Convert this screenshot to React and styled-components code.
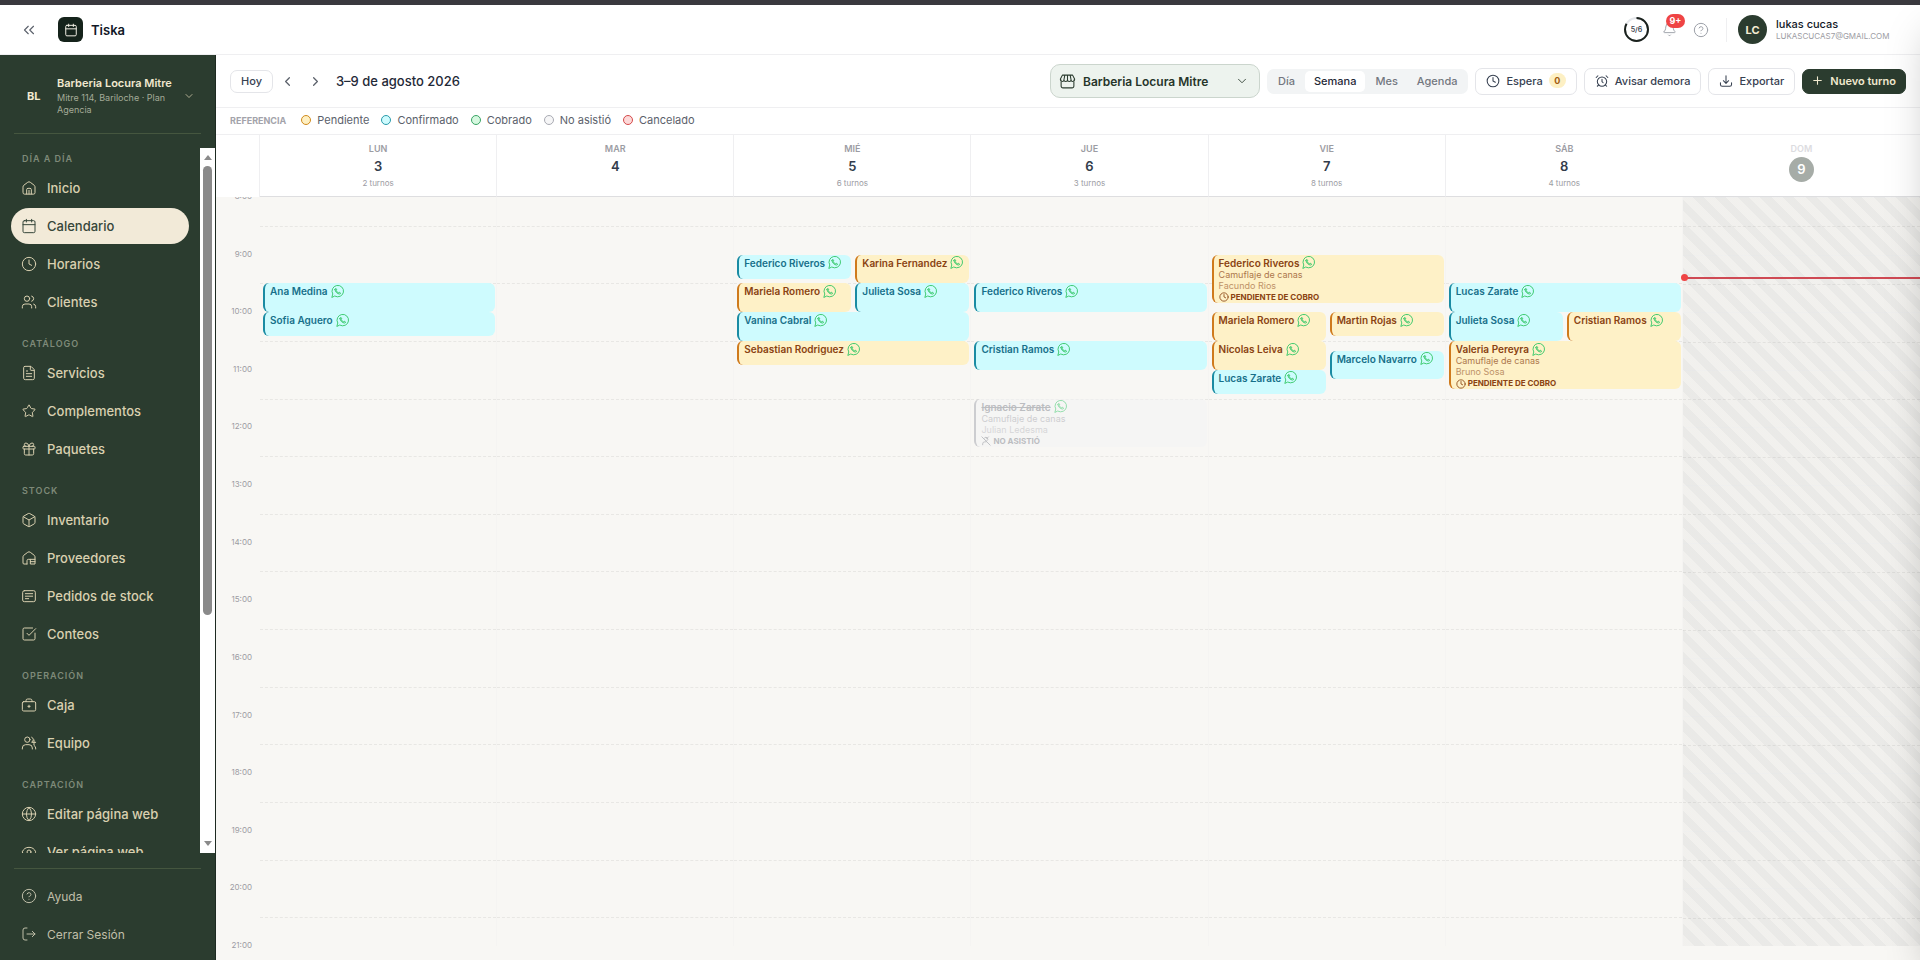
import React from "react";
import styled, { createGlobalStyle, css } from "styled-components";
import {
  AlarmClock, Bell, Box, Calendar, ChevronDown, ChevronLeft, ChevronRight, ChevronsLeft,
  CircleHelp, Clock, Eye, FileText, Gift, Globe, Plus, SquareCheckBig, Star, Users,
} from "lucide-react";

const c = {
  green: "#2b3c2f",
  cream: "#d9d0b0",
  ink: "#1f2937",
  line: "#efeff1",
  muted: "#9c9ca3",
};

const Global = createGlobalStyle`
  *, *::before, *::after { box-sizing: border-box; }
  body { margin: 0; font-family: Inter, "Liberation Sans", sans-serif; color: ${c.ink}; background: #fff; }
  button, select { font: inherit; color: inherit; margin: 0; }
  button { cursor: pointer; padding: 0; border: 0; background: none; }
  a { color: inherit; text-decoration: none; }
  ul, h1, p { margin: 0; padding: 0; list-style: none; }
  svg { display: block; flex: none; }
`;

const Svg = ({ size = 16, sw = 1.5, children }) => (
  <svg width={size} height={size} viewBox="0 0 24 24" fill="none" stroke="currentColor"
    strokeWidth={sw} strokeLinecap="round" strokeLinejoin="round" aria-hidden="true">{children}</svg>
);
const HomeIcon = () => (
  <Svg><path d="M3 10.2c0-.9.4-1.7 1.100-2.200l6-4.600a3.200 3.200 0 0 1 3.800 0l6 4.600c.7.5 1.100 1.300 1.100 2.200V19a2.200 2.200 0 0 1-2.200 2.200H5.200A2.200 2.200 0 0 1 3 19z" /><path d="M8.500 21v-6.500a2 2 0 0 1 2-2h3a2 2 0 0 1 2 2V21M12 15.500V21" /></Svg>
);
const SupplierIcon = () => (
  <Svg><path d="M9 21H4.500A1.500 1.500 0 0 1 3 19.500v-9.300c0-.9.4-1.700 1.100-2.200l6-4.600a3.200 3.200 0 0 1 3.800 0l6 4.600c.7.5 1.100 1.300 1.100 2.200V21H14v-7h7M14 17.500h7M9 21v-5a2 2 0 0 1 2-2h3" /></Svg>
);
const OrderIcon = () => (
  <Svg><rect x="2.500" y="4" width="19" height="16.500" rx="2.500" /><path d="M6.500 8.500h11M6.500 12.300h11M6.500 16h5" /></Svg>
);
const StarIcon = () => <Star size={16} strokeWidth={1.6} aria-hidden="true" viewBox="-1 -1 26 26" />;
const CashIcon = () => (
  <Svg><rect x="2" y="7" width="20" height="14" rx="2" /><path d="M7.500 7V5.500A2.500 2.500 0 0 1 10 3h4a2.500 2.500 0 0 1 2.500 2.500V7M12 12.300v3.400M10.300 14h3.400" /></Svg>
);
const TeamIcon = () => (
  <Svg><circle cx="9.500" cy="7" r="4" /><path d="M2 21v-1.500a5 5 0 0 1 5-5h5a5 5 0 0 1 5 5V21M16 3.300a4 4 0 0 1 0 7.400M19.500 7.500v7M17 11h5M19.500 15.500a5 5 0 0 1 2.500 4V21" /></Svg>
);
const ExitIcon = () => (
  <Svg><path d="M9 3H6a3 3 0 0 0-3 3v12a3 3 0 0 0 3 3h3M9 12h12M17 8l4 4-4 4" /></Svg>
);
const StoreIcon = () => (
  <Svg size={17}><path d="M3 10v8.500A2.500 2.500 0 0 0 5.500 21h13a2.500 2.500 0 0 0 2.500-2.500V10M4.800 3h14.400L22 8.500v1a2.200 2.200 0 0 1-5 0 2.500 2.500 0 0 1-5 0 2.500 2.500 0 0 1-5 0 2.200 2.200 0 0 1-5 0v-1zM7 9.500 8.200 3M12 9.500V3M17 9.500 15.800 3" /></Svg>
);
const ExportIcon = () => (
  <Svg size={14} sw={1.8}><path d="M12 3v13M7.500 11.500 12 16l4.500-4.500M2.500 15v3a3 3 0 0 0 3 3h13a3 3 0 0 0 3-3v-3" /></Svg>
);
const AbsentIcon = () => (
  <Svg size={10} sw={2.2}><path d="M2 2l20 20M8.500 4.500A4.500 4.500 0 1 1 14 11.500M18 2l-5 5M4 21v-2a5 5 0 0 1 5-5h3" /></Svg>
);
const WhatsApp = () => (
  <svg width="13" height="13" viewBox="0 0 24 24" fill="none" stroke="#34c768" strokeWidth="1.7" strokeLinecap="round" strokeLinejoin="round" aria-label="WhatsApp">
    <path d="M1.700 22.300 3.300 16.600A10.600 10.600 0 1 1 7.500 20.700z" />
    <path d="M7.300 8.200c.2 4.300 4.200 8.300 8.500 8.500 1.100 0 1.900-.9 1.900-1.900l-2.700-1.500-1.500 1.100c-1.700-.7-3.100-2.100-3.900-3.900l1.100-1.500-1.400-2.700c-1.100 0-2 .8-2 1.900z" />
  </svg>
);

/* ---------- shell ---------- */
const Shell = styled.div`height: 100vh; display: flex; flex-direction: column; overflow: hidden;`;
const TopStrip = styled.div`height: 5px; flex: none; background: #3a393e;`;
const TopBar = styled.header`
  height: 50px; flex: none; display: flex; align-items: center; padding: 0 25px 0 20px;
  border-bottom: 1px solid ${c.line}; background: #fff;
`;
const IconButton = styled.button`
  display: grid; place-items: center; width: ${(p) => p.$w || 16}px; height: 24px; color: ${(p) => p.$color || "#5b616b"};
`;
const Logo = styled.a`
  display: flex; align-items: center; gap: 8px; margin-left: 22px; font-size: 13px; font-weight: 600; color: #111827;
`;
const LogoMark = styled.span`
  display: grid; place-items: center; width: 25px; height: 25px; border-radius: 6px; background: #15231b; color: #f4f1e6;
`;
const TopRight = styled.div`margin-left: auto; display: flex; align-items: center;`;
const Ring = styled.div`
  display: grid; place-items: center; width: 25px; height: 25px; font-size: 7px; font-weight: 600; color: #3f4650;
  svg, span { grid-area: 1 / 1; }
`;
const BellWrap = styled.div`position: relative; margin-left: 12px;`;
const Badge = styled.span`
  position: absolute; left: 5px; top: -4px; width: 19px; height: 14px; border-radius: 7px; background: #ef4444;
  color: #fff; font-size: 9px; font-weight: 700; line-height: 14px; text-align: center;
`;
const Divider = styled.span`width: 1px; height: 24px; margin: 0 11px 0 1px; background: ${c.line};`;
const Profile = styled.button`display: flex; align-items: center; gap: 9px; text-align: left;`;
const Avatar = styled.span`
  display: grid; place-items: center; width: 29px; height: 29px; border-radius: 50%; background: ${c.green};
  color: #f4ecd2; font-size: 11px; font-weight: 700;
`;
const ProfileText = styled.span`min-width: 119px;`;
const ProfileName = styled.span`display: block; font-size: 11px; line-height: 13px; font-weight: 500; color: #111827;`;
const ProfileMail = styled.span`display: block; font-size: 8px; line-height: 11px; color: ${c.muted};`;
const Body = styled.div`flex: 1; min-height: 0; display: flex;`;

/* ---------- sidebar ---------- */
const Sidebar = styled.aside`
  width: 216px; flex: none; display: flex; flex-direction: column; background: ${c.green}; color: ${c.cream};
  border-right: 1px solid #1d2a21;
`;
const Account = styled.button`
  height: 79px; flex: none; margin: 0 14px; padding: 3px 6px 0 13px; display: flex; align-items: center; text-align: left;
  border-bottom: 1px solid #45563f;
`;
const Initials = styled.span`width: 30px; font-size: 11px; font-weight: 700; color: #f1e9d0;`;
const AccountText = styled.span`flex: 1; font-size: 9px; line-height: 12px; color: #a4ab98;`;
const AccountName = styled.strong`
  display: block; margin-bottom: 1px; font-size: 11px; line-height: 15px; font-weight: 600; white-space: nowrap; color: #f1e9d0;
`;
const NavArea = styled.div`flex: 1; min-height: 0; margin-top: 14px; display: flex;`;
const Nav = styled.nav`flex: 1; min-width: 0; overflow: hidden; padding: 4px 11px 0;`;
const NavTitle = styled.p`
  height: 14px; margin: ${(p) => (p.$first ? 0 : 17)}px 0 4px 11px; font-size: 9px; line-height: 14px; font-weight: 600;
  letter-spacing: 1px; color: #7e8a79;
`;
const NavList = styled.ul`display: flex; flex-direction: column; gap: 2px;`;
const NavLink = styled.a`
  height: 36px; display: flex; align-items: center; gap: 10px; padding: 0 10px; border-radius: 18px;
  font-size: 13px; font-weight: 500;
  ${(p) => p.$active && css`background: #f2ead8; color: #36463a;`}
  ${(p) => p.$quiet && css`font-size: 12px; font-weight: 400; color: #c0bfa9;`}
`;
const ScrollTrack = styled.div`
  width: 15px; flex: none; display: flex; flex-direction: column; align-items: center; background: #fff; padding: 7px 0;
`;
const ScrollArrow = styled.span`
  border: 4px solid transparent; border-top-width: 0; border-bottom: 5px solid #8a8a8a;
  ${(p) => p.$down && css`margin-top: auto; transform: rotate(180deg);`}
`;
const ScrollThumb = styled.span`width: 9px; height: 65%; margin-top: 6px; border-radius: 5px; background: #8a8a8a;`;
const SideFoot = styled.nav`
  flex: none; height: 92px; margin: 15px 14px 0; padding-top: 9px; border-top: 1px solid #45563f;
  ul { margin: 0 -3px; }
`;

/* ---------- toolbar ---------- */
const Main = styled.main`flex: 1; min-width: 0; display: flex; flex-direction: column;`;
const Toolbar = styled.div`
  height: 53px; flex: none; display: flex; align-items: center; padding: 0 14px; border-bottom: 1px solid ${c.line};
`;
const ToolButton = styled.button`
  height: ${(p) => p.$h || 27}px; display: flex; align-items: center; gap: 6px; padding: 0 10px 1px; white-space: nowrap;
  border: 1px solid #e4e5e9; border-radius: 7px; background: #fff; font-size: 11px; font-weight: 500; color: #374151;
  ${(p) => p.$primary && css`padding: 0 9px 1px 8px; background: ${c.green}; border-color: ${c.green}; color: #f1e9cf; font-weight: 600;`}
`;
const Period = styled.h1`margin-left: 8px; font-size: 13px; line-height: 18px; font-weight: 500; color: ${c.ink};`;
const Arrows = styled.div`display: flex; gap: 4px; margin-left: 3px;`;
const Tools = styled.div`margin-left: auto; display: flex; align-items: center; gap: 7px;`;
const StorePicker = styled.label`
  width: 210px; height: 34px; display: flex; align-items: center; gap: 7px; padding: 0 10px 0 8px;
  border: 1px solid #cbd5cd; border-radius: 10px; background: #edf3ee; color: ${c.green};
  select { flex: 1; min-width: 0; appearance: none; border: 0; padding: 0; background: none; outline: 0;
    font-size: 12px; font-weight: 600; color: #26352a; }
`;
const Segments = styled.div`display: flex; gap: 1px; height: 25px; padding: 2px; border-radius: 7px; background: #f2f4f5;`;
const Segment = styled.button`
  padding: 0 9px 1px; border-radius: 5px; font-size: 11px; font-weight: 500; color: #73777f;
  ${(p) => p.$active && css`background: #fff; color: #1f2937;`}
`;
const Count = styled.span`
  min-width: 17px; height: 15px; border-radius: 8px; background: #fdf0c4; color: #a15c12; font-size: 9px; line-height: 15px;
  font-weight: 700; text-align: center;
`;
const Legend = styled.div`
  height: 27px; flex: none; display: flex; align-items: center; gap: 12px; padding: 0 14px 2px; border-bottom: 1px solid ${c.line};
  font-size: 11px; color: #5b616b;
  strong { margin-right: 3px; font-size: 9px; font-weight: 700; color: #a3a3aa; }
`;
const LegendItem = styled.span`
  display: flex; align-items: center; gap: 6px;
  &::before { content: ""; width: 10px; height: 10px; border-radius: 50%; border: 1px solid ${(p) => p.$line}; background: ${(p) => p.$fill}; }
`;

/* ---------- calendar ---------- */
const columns = css`display: grid; grid-template-columns: 44px repeat(7, minmax(0, 1fr));`;
const DayHeads = styled.div`${columns} height: 62px; flex: none;`;
const Corner = styled.div`border-right: 1px solid ${c.line};`;
const DayHead = styled.div`
  display: flex; flex-direction: column; align-items: center; padding-top: 8px;
  border-bottom: 1px solid #dedee0; border-right: 1px solid ${c.line};
  &:nth-last-child(-n + 2) { border-right: 0; }
`;
const DayName = styled.span`font-size: 9px; line-height: 12px; font-weight: 600; color: ${(p) => (p.$off ? "#dcdcdf" : c.muted)};`;
const DayNumber = styled.span`
  margin-top: 2px; font-size: 13px; line-height: 18px; font-weight: 600; color: #323c4b;
  ${(p) => p.$today && css`width: 25px; height: 25px; line-height: 25px; border-radius: 50%; background: #a6aca7; color: #fff; text-align: center;`}
`;
const DayCount = styled.span`margin-top: 2px; font-size: 8px; line-height: 12px; color: ${c.muted};`;
const Canvas = styled.div`${columns} flex: 1; min-height: 0; overflow: hidden; background: #f8f7f4; align-items: start;`;
const Hours = styled.div`
  height: 749px; display: grid; grid-template-rows: repeat(13, minmax(0, 1fr)) 0; padding-right: 8px; text-align: right;
  font-size: 8px; line-height: 12px; color: ${c.muted};
  span { margin-top: -7px; }
`;
const Day = styled.div`position: relative; height: 749px; display: grid; grid-template-rows: repeat(13, minmax(0, 1fr));`;
const HourCell = styled.div`
  display: grid; grid-template-rows: 1fr 1fr; border-right: 1px solid #f5f4f2;
  &::after { content: ""; grid-row: 2; border-top: 1px dashed #e8e7e4; }
  ${(p) => p.$closed && css`border-top: 1px solid #f6f6f5; border-right: 0;`}
`;
const Closed = styled.div`
  position: absolute; inset: 0;
  background: repeating-linear-gradient(45deg, rgba(120,120,120,.05) 0 8px, rgba(110,115,120,.1) 8px 16px);
`;
const Lane = styled.div`position: absolute; inset: 0 2px 0 3px;`;
const NowLine = styled.div`
  position: absolute; left: 0; right: 0; height: 2px; background: #cf4a54;
  &::before { content: ""; position: absolute; left: -2px; top: -3px; width: 7px; height: 7px; border-radius: 50%; background: #ef4444; }
`;

const tones = {
  ok: { bg: "#cefbfe", line: "#1a8ba3", text: "#17708a" },
  due: { bg: "#fef1c7", line: "#cf7a1c", text: "#8a4312" },
  off: { bg: "#f4f4f5", line: "#a9abb3", text: "#8b8e97" },
};
const EventCard = styled.article`
  position: absolute; width: ${(p) => (p.$half ? "calc(50% - 2px)" : "100%")}; left: ${(p) => (p.$half === 2 ? "calc(50% + 2px)" : 0)};
  padding: 2px 0 0 5px; overflow: hidden; white-space: nowrap;
  border-left: 2px solid ${(p) => tones[p.$tone].line}; border-radius: 6px;
  background: ${(p) => tones[p.$tone].bg}; color: ${(p) => tones[p.$tone].text}; font-size: 9px; line-height: 11px;
  ${(p) => p.$tone === "off" && css`opacity: .55;`}
`;
const EventName = styled.strong`
  display: flex; align-items: center; gap: 3px; height: 12px; font-size: 10px; line-height: 12px; font-weight: 600;
  span { ${(p) => p.$struck && "text-decoration: line-through;"} }
`;
const EventLine = styled.p`opacity: ${(p) => (p.$faint ? 0.55 : 0.7)};`;
const EventState = styled.p`display: flex; align-items: center; gap: 2px; margin-top: 1px; font-size: 8px; line-height: 11px; font-weight: 700;`;
const DrawerShade = styled.div`
  position: fixed; left: 100%; top: 5px; bottom: 0; width: 320px; box-shadow: 0 20px 40px -10px rgba(0,0,0,.25); pointer-events: none;
`;

const I = (C, size = 16) => <C size={size} strokeWidth={1.5} aria-hidden="true" />;
const nav = [
  ["DÍA A DÍA", [["Inicio", <HomeIcon />], ["Calendario", I(Calendar)], ["Horarios", I(Clock)], ["Clientes", I(Users)]]],
  ["CATÁLOGO", [["Servicios", I(FileText)], ["Complementos", <StarIcon />], ["Paquetes", I(Gift)]]],
  ["STOCK", [["Inventario", I(Box)], ["Proveedores", <SupplierIcon />], ["Pedidos de stock", <OrderIcon />], ["Conteos", I(SquareCheckBig)]]],
  ["OPERACIÓN", [["Caja", <CashIcon />], ["Equipo", <TeamIcon />]]],
  ["CAPTACIÓN", [["Editar página web", I(Globe)], ["Ver página web", I(Eye)]]],
];

const legend = [
  ["Pendiente", "#d08a1d", "#fef0c3"], ["Confirmado", "#2a9bab", "#cefbfe"], ["Cobrado", "#3aa565", "#d6f8e0"],
  ["No asistió", "#a9abb3", "#f6f6f7"], ["Cancelado", "#d44a4a", "#fdd9d9"],
];

/* [name, start minute, duration, tone, half, service, staff] — minutes counted from 8:00 */
const week = [
  { d: "LUN", n: 3, t: "2 turnos", e: [["Ana Medina", 90, 30, "ok"], ["Sofia Aguero", 120, 25, "ok"]] },
  { d: "MAR", n: 4, e: [] },
  { d: "MIÉ", n: 5, t: "6 turnos", e: [
    ["Federico Riveros", 60, 25, "ok", 1], ["Karina Fernandez", 60, 30, "due", 2],
    ["Mariela Romero", 90, 30, "due", 1], ["Julieta Sosa", 90, 30, "ok", 2],
    ["Vanina Cabral", 120, 30, "ok"], ["Sebastian Rodriguez", 150, 25, "due"]] },
  { d: "JUE", n: 6, t: "3 turnos", e: [
    ["Federico Riveros", 90, 30, "ok"], ["Cristian Ramos", 150, 30, "ok"],
    ["Ignacio Zarate", 210, 50, "off", 0, "Camuflaje de canas", "Julian Ledesma"]] },
  { d: "VIE", n: 7, t: "8 turnos", e: [
    ["Federico Riveros", 60, 50, "due", 0, "Camuflaje de canas", "Facundo Rios"],
    ["Mariela Romero", 120, 30, "due", 1], ["Martin Rojas", 120, 25, "due", 2],
    ["Nicolas Leiva", 150, 30, "due", 1], ["Marcelo Navarro", 160, 30, "ok", 2], ["Lucas Zarate", 180, 25, "ok", 1]] },
  { d: "SÁB", n: 8, t: "4 turnos", e: [
    ["Lucas Zarate", 90, 30, "ok"], ["Julieta Sosa", 120, 30, "ok", 1], ["Cristian Ramos", 120, 30, "due", 2],
    ["Valeria Pereyra", 150, 50, "due", 0, "Camuflaje de canas", "Bruno Sosa"]] },
  { d: "DOM", n: 9, today: true, e: [] },
];
const DAY_MINUTES = 13 * 60;
const pct = (m) => `${(m / DAY_MINUTES) * 100}%`;
const hours = Array.from({ length: 14 }, (_, i) => `${8 + i}:00`);

const Event = ({ data: [name, start, length, tone, half, service, staff] }) => (
  <EventCard $tone={tone} $half={half} style={{ top: pct(start), height: pct(length) }}>
    <EventName $struck={tone === "off"}><span>{name}</span><WhatsApp /></EventName>
    {service && (
      <>
        <EventLine>{service}</EventLine>
        <EventLine $faint>{staff}</EventLine>
        <EventState>
          {tone === "off" ? <AbsentIcon /> : <Clock size={10} />}
          {tone === "off" ? "NO ASISTIÓ" : "PENDIENTE DE COBRO"}
        </EventState>
      </>
    )}
  </EventCard>
);

export default function App() {
  return (
    <Shell>
      <Global />
      <TopStrip />
      <TopBar>
        <IconButton aria-label="Contraer menú">{I(ChevronsLeft, 18)}</IconButton>
        <Logo href="#"><LogoMark><Calendar size={14} strokeWidth={1.7} /></LogoMark>Tiska</Logo>
        <TopRight>
          <Ring>
            <svg width="25" height="25" viewBox="0 0 25 25" fill="none" strokeWidth="2">
              <circle cx="12.500" cy="12.500" r="11.500" stroke="#e5e7eb" />
              <circle cx="12.500" cy="12.500" r="11.500" stroke="#1a211d" pathLength="6" strokeDasharray="5 1" transform="rotate(-90 12.500 12.500)" />
            </svg>
            <span>5/6</span>
          </Ring>
          <BellWrap>
            <IconButton $color="#9ca0a8" aria-label="Notificaciones">{I(Bell, 15)}</IconButton>
            <Badge>9+</Badge>
          </BellWrap>
          <IconButton $color="#9ca0a8" $w={48} aria-label="Ayuda">{I(CircleHelp, 16)}</IconButton>
          <Divider />
          <Profile>
            <Avatar>LC</Avatar>
            <ProfileText><ProfileName>lukas cucas</ProfileName><ProfileMail>LUKASCUCAS7@GMAIL.COM</ProfileMail></ProfileText>
          </Profile>
        </TopRight>
      </TopBar>
      <Body>
        <Sidebar>
          <Account>
            <Initials>BL</Initials>
            <AccountText><AccountName>Barberia Locura Mitre</AccountName>Mitre 114, Bariloche · Plan Agencia</AccountText>
            {I(ChevronDown, 12)}
          </Account>
          <NavArea>
            <Nav aria-label="Principal">
              {nav.map(([title, items], i) => (
                <React.Fragment key={title}>
                  <NavTitle $first={i === 0}>{title}</NavTitle>
                  <NavList>
                    {items.map(([label, icon]) => (
                      <li key={label}><NavLink href="#" $active={label === "Calendario"}>{icon}{label}</NavLink></li>
                    ))}
                  </NavList>
                </React.Fragment>
              ))}
            </Nav>
            <ScrollTrack aria-hidden="true"><ScrollArrow /><ScrollThumb /><ScrollArrow $down /></ScrollTrack>
          </NavArea>
          <SideFoot aria-label="Cuenta">
            <NavList>
              <li><NavLink href="#" $quiet>{I(CircleHelp)}Ayuda</NavLink></li>
              <li><NavLink href="#" $quiet><ExitIcon />Cerrar Sesión</NavLink></li>
            </NavList>
          </SideFoot>
        </Sidebar>
        <Main>
          <Toolbar>
            <ToolButton $h={23}>Hoy</ToolButton>
            <Arrows>
              <IconButton $w={24} aria-label="Semana anterior"><ChevronLeft size={15} /></IconButton>
              <IconButton $w={24} aria-label="Semana siguiente"><ChevronRight size={15} /></IconButton>
            </Arrows>
            <Period>3–9 de agosto 2026</Period>
            <Tools>
              <StorePicker>
                <StoreIcon />
                <select aria-label="Sucursal" defaultValue="m"><option value="m">Barberia Locura Mitre</option></select>
                {I(ChevronDown, 14)}
              </StorePicker>
              <Segments role="group" aria-label="Vista">
                <Segment>Día</Segment><Segment $active aria-pressed="true">Semana</Segment><Segment>Mes</Segment><Segment>Agenda</Segment>
              </Segments>
              <ToolButton><Clock size={14} strokeWidth={1.8} />Espera <Count>0</Count></ToolButton>
              <ToolButton><AlarmClock size={14} strokeWidth={1.8} />Avisar demora</ToolButton>
              <ToolButton><ExportIcon />Exportar</ToolButton>
              <ToolButton $primary $h={25}><Plus size={13} />Nuevo turno</ToolButton>
            </Tools>
          </Toolbar>
          <Legend>
            <strong>REFERENCIA</strong>
            {legend.map(([label, line, fill]) => <LegendItem key={label} $line={line} $fill={fill}>{label}</LegendItem>)}
          </Legend>
          <DayHeads>
            <Corner />
            {week.map((w) => (
              <DayHead key={w.d}>
                <DayName $off={w.today}>{w.d}</DayName>
                <DayNumber $today={w.today}>{w.n}</DayNumber>
                {w.t && <DayCount>{w.t}</DayCount>}
              </DayHead>
            ))}
          </DayHeads>
          <Canvas>
            <Hours>{hours.map((h) => <span key={h}>{h}</span>)}</Hours>
            {week.map((w) => (
              <Day key={w.d}>
                {hours.slice(1).map((h) => <HourCell key={h} $closed={w.today} />)}
                {w.today && <Closed />}
                <Lane>{w.e.map((e) => <Event key={e[0]} data={e} />)}</Lane>
                {w.today && <NowLine style={{ top: pct(83) }} />}
              </Day>
            ))}
          </Canvas>
        </Main>
      </Body>
      <DrawerShade />
    </Shell>
  );
}
